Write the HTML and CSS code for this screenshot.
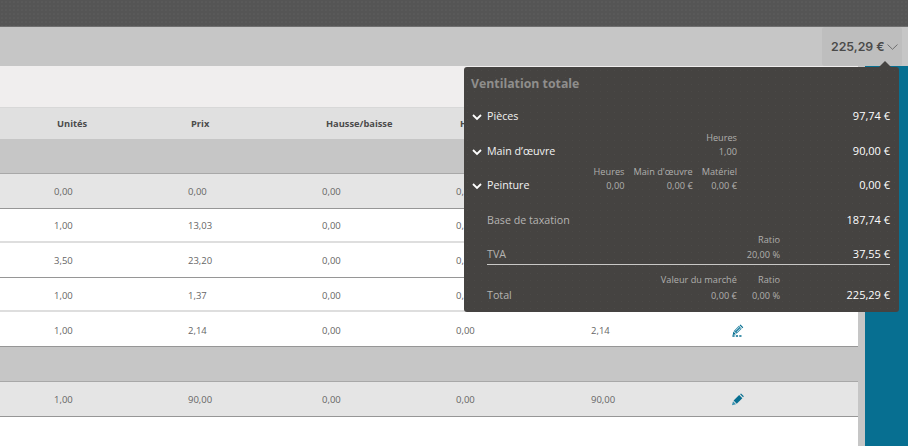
FILE: index.html
```html
<!DOCTYPE html>
<html lang="fr">
<head>
<meta charset="utf-8">
<title>Ventilation totale</title>
<link rel="stylesheet" href="styles.css">
</head>
<body>
<div class="topbar"></div>
<div class="toolbar">
  <button class="total-btn"><span>225,29 €</span>
    <svg class="chev-thin" viewBox="0 0 11 6" width="11" height="6"><path d="M.5.5 5.500 5.300 10.500.5" fill="none" stroke="#666" stroke-width=".9"/></svg>
  </button>
</div>
<div class="main">
  <div class="content">
    <div class="subbar"></div>
    <div class="row head"><span class="c">Unités</span><span class="c">Prix</span><span class="c">Hausse/baisse</span><span class="c">H</span><span class="c"></span><span></span></div>
    <div class="group"></div>
    <div class="row sel line"><span>0,00</span><span>0,00</span><span>0,00</span><span>0,00</span><span></span><span></span></div>
    <div class="row faint"><span>1,00</span><span>13,03</span><span>0,00</span><span>0,00</span><span></span><span></span></div>
    <div class="row line"><span>3,50</span><span>23,20</span><span>0,00</span><span>0,00</span><span></span><span></span></div>
    <div class="row faint"><span>1,00</span><span>1,37</span><span>0,00</span><span>0,00</span><span></span><span></span></div>
    <div class="row line"><span>1,00</span><span>2,14</span><span>0,00</span><span>0,00</span><span>2,14</span>
      <span class="ic"><svg viewBox="0 0 14 14" width="13" height="13"><path d="M3 7.500 8.500 2l3 3L6 10.500z" fill="#2a86a5"/><path d="M4.800 7.200 8.800 3.200M6.300 8.700l4-4" stroke="#fff" stroke-width=".7"/><path d="m9.200 1.300 1-.8 3 3-.8 1zM2.600 8.200l2.800 2.800-3.600.8z" fill="#076f91"/><path d="M1.500 12h2.400v1.800H1.500zm3.700 0h2.400v1.800H5.200zm3.700 0h2.400v1.800H8.900z" fill="#076f91"/></svg></span></div>
    <div class="group"></div>
    <div class="row sel line"><span>1,00</span><span>90,00</span><span>0,00</span><span>0,00</span><span>90,00</span>
      <span class="ic"><svg viewBox="0 0 14 14" width="13" height="13"><path d="M2.800 8.200 8.800 2.200l3.400 3.400-6 6z" fill="#076f91"/><path d="M9.800 1.400 10.800.6l3 3-.8 1z" fill="#076f91"/><path d="M2.200 9 5.400 12.200 1 13.300z" fill="#3b93b0"/></svg></span></div>
  </div>
  <div class="gutter"></div>
  <div class="side"></div>
</div>

<section class="pop">
  <h2>Ventilation totale</h2>
  <div class="pline first"><svg class="chev" viewBox="0 0 10 7" width="10" height="7"><path d="M1 1l4 4 4-4" fill="none" stroke="#fff" stroke-width="1.800"/></svg><span class="lab w">Pièces</span><span class="amt">97,74 €</span></div>
  <div class="pline"><svg class="chev" viewBox="0 0 10 7" width="10" height="7"><path d="M1 1l4 4 4-4" fill="none" stroke="#fff" stroke-width="1.800"/></svg><span class="lab w">Main d’œuvre</span>
    <div class="cols c1"><div><b>Heures</b><i>1,00</i></div></div><span class="amt">90,00 €</span></div>
  <div class="pline"><svg class="chev" viewBox="0 0 10 7" width="10" height="7"><path d="M1 1l4 4 4-4" fill="none" stroke="#fff" stroke-width="1.800"/></svg><span class="lab w">Peinture</span>
    <div class="cols c1"><div><b>Heures</b><i>0,00</i></div><div><b>Main d'œuvre</b><i>0,00 €</i></div><div><b>Matériel</b><i>0,00 €</i></div></div><span class="amt">0,00 €</span></div>
  <div class="pline"><span class="lab">Base de taxation</span><span class="amt">187,74 €</span></div>
  <div class="pline rule"><span class="lab">TVA</span>
    <div class="cols c2"><div><b>Ratio</b><i>20,00 %</i></div></div><span class="amt">37,55 €</span></div>
  <div class="pline tot"><span class="lab">Total</span>
    <div class="cols c2"><div><b>Valeur du marché</b><i>0,00 €</i></div><div><b>Ratio</b><i>0,00 %</i></div></div><span class="amt">225,29 €</span></div>
</section>
<div class="arrow"></div>
</body>
</html>
```

FILE: styles.css
```css
* { box-sizing: border-box; }
html, body { margin: 0; height: 100%; overflow: hidden; }
body { width: 908px; height: 446px; background: #fff; font-family: "Open Sans", sans-serif; position: relative; color: #666; }
.topbar { height: 27px; background-color: #555; background-image: radial-gradient(circle, #5d5d5d 0.6px, transparent 0.8px); background-size: 4px 4px; border-bottom: 1px solid #6f6f6f; }
.toolbar { height: 39px; background: #c6c6c6; display: flex; justify-content: flex-end; padding-right: 6px; }
.total-btn { width: 80px; border: 0; border-radius: 3px; background: #bebebe; padding: 0 0 0 9px; display: flex; align-items: center; gap: 2px; font: 600 12.300px "Inter", "Liberation Sans", sans-serif; color: #4a4a4a; height: 39px; white-space: nowrap; }
.main { display: flex; height: 380px; }
.content { width: 858px; }
.gutter { width: 7px; background: #c6c6c6; }
.side { flex: 1; background: #076f91; }
.subbar { height: 41px; background: #f0eeee; }
.row { display: grid; grid-template-columns: 188px 134px 134px 135px 140px 127px; height: 34.600px; align-items: center; padding-top: 2px; font-size: 9.500px; color: #666; }
.row > span:first-child { padding-left: 54px; }
.row.head { height: 32px; padding-top: 0; background: #e0e0e0; border-top: 1px solid #d8d8d8; font-weight: 700; font-size: 9.300px; color: #4b4b4b; }
.row.head > span:nth-child(1) { padding-left: 57px; }
.row.head > span:nth-child(2) { padding-left: 3px; }
.row.head > span:nth-child(3) { padding-left: 4px; }
.row.head > span:nth-child(4) { padding-left: 4px; }
.group { height: 35px; background: #c6c6c6; border-bottom: 1px solid #a8a8a8; }
.row.sel { background: #e5e5e5; }
.line { border-bottom: 1px solid #969696; }
.faint { border-bottom: 2px solid #dedede; }
.ic { display: flex; }
.pop { position: absolute; left: 464px; top: 67px; width: 435px; height: 245px; background-color: #454341; background-image: radial-gradient(circle, #4b4947 0.5px, transparent 0.7px); background-size: 7px 7px; border-radius: 3px; color: #fff; padding: 0 9px 0 7px; }
.pop h2 { margin: 0; font-size: 12.300px; line-height: 17px; padding-top: 8px; height: 31px; color: #8f8e8c; font-weight: 700; }
.pline { position: relative; height: 34.500px; display: flex; align-items: center; font-size: 10.700px; }
.pline.first { margin-top: 1px; }
.chev { position: absolute; left: 1px; top: 15px; }
.lab { position: absolute; left: 16px; top: 9px; line-height: 16px; color: #b5b4b2; }
.lab.w { color: #f2f2f2; }
.amt { position: absolute; right: 0; top: 9px; line-height: 16px; color: #fff; font-size: 11px; }
.cols { position: absolute; display: flex; gap: 9px; text-align: right; font-size: 9.200px; color: #b0afad; }
.cols.c1 { right: 153px; top: -3px; }
.cols.c2 { right: 110px; top: -5px; }
.cols div { display: flex; flex-direction: column; }
.cols b, .cols i { font-weight: 400; font-style: normal; line-height: 14px; white-space: nowrap; }
.rule .cols b, .rule .cols i { line-height: 15px; }
.rule::after { content: ""; position: absolute; left: 16px; right: 0; bottom: 7px; height: 1px; background: #c9c8c6; }
.tot .lab, .tot .amt { top: 15px; }
.tot .cols { top: 0; gap: 15px; }
.tot .cols b, .tot .cols i { line-height: 16px; }
.arrow { position: absolute; left: 879px; top: 61px; width: 0; height: 0; border: 6px solid transparent; border-top: 0; border-bottom-color: #454341; }
```
